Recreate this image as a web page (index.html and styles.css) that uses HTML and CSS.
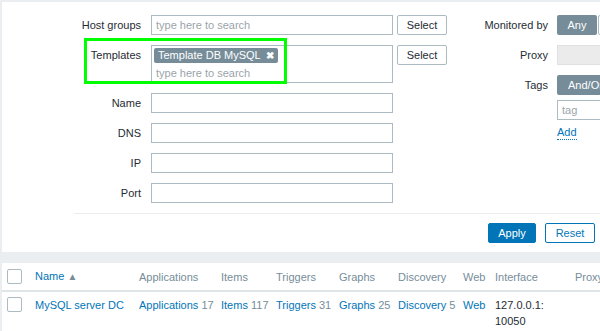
FILE: index.html
```html
<!DOCTYPE html>
<html>
<head>
<meta charset="utf-8">
<link rel="stylesheet" href="styles.css">
</head>
<body>
<div class="filter">
  <div class="columns">
    <div class="col-left">
      <div class="row">
        <label class="lbl">Host groups</label>
        <div class="input placeholder">type here to search</div>
        <button class="btn-alt">Select</button>
      </div>
      <div class="row highlight-row">
        <label class="lbl">Templates</label>
        <div class="multiselect">
          <span class="chip">Template DB MySQL <span class="chip-x">✖</span></span>
          <div class="placeholder ms-ph">type here to search</div>
        </div>
        <button class="btn-alt">Select</button>
        <div class="highlight"></div>
      </div>
      <div class="row">
        <label class="lbl">Name</label>
        <div class="input"></div>
      </div>
      <div class="row">
        <label class="lbl">DNS</label>
        <div class="input"></div>
      </div>
      <div class="row">
        <label class="lbl">IP</label>
        <div class="input"></div>
      </div>
      <div class="row">
        <label class="lbl">Port</label>
        <div class="input"></div>
      </div>
    </div>
    <div class="col-right">
      <div class="row">
        <label class="lbl lbl-r">Monitored by</label>
        <div class="seg">
          <span class="seg-on">Any</span><span class="seg-off"></span><span class="seg-off"></span>
        </div>
      </div>
      <div class="row">
        <label class="lbl lbl-r">Proxy</label>
        <div class="input disabled"></div>
      </div>
      <div class="row">
        <label class="lbl lbl-r">Tags</label>
        <div class="tagblock">
          <div class="seg">
            <span class="seg-on seg-wide">And/Or</span><span class="seg-off"></span>
          </div>
          <div class="input tag-input placeholder">tag</div>
          <a class="add">Add</a>
        </div>
      </div>
    </div>
  </div>
  <div class="sep"></div>
  <div class="actions">
    <button class="btn-apply">Apply</button>
    <button class="btn-reset">Reset</button>
  </div>
</div>

<table class="list">
  <colgroup>
    <col class="c-cb"><col class="c-name"><col class="c-apps"><col class="c-items"><col class="c-trig"><col class="c-graphs"><col class="c-disc"><col class="c-web"><col class="c-if"><col class="c-proxy">
  </colgroup>
  <thead>
    <tr>
      <th><span class="cb"></span></th>
      <th><a class="link">Name</a> <span class="arrow">▲</span></th>
      <th>Applications</th>
      <th>Items</th>
      <th>Triggers</th>
      <th>Graphs</th>
      <th>Discovery</th>
      <th>Web</th>
      <th>Interface</th>
      <th>Proxy</th>
    </tr>
  </thead>
  <tbody>
    <tr>
      <td><span class="cb"></span></td>
      <td><a class="link">MySQL server DC</a></td>
      <td><a class="link">Applications</a> <span class="cnt">17</span></td>
      <td><a class="link">Items</a> <span class="cnt">117</span></td>
      <td><a class="link">Triggers</a> <span class="cnt">31</span></td>
      <td><a class="link">Graphs</a> <span class="cnt">25</span></td>
      <td><a class="link">Discovery</a> <span class="cnt">5</span></td>
      <td><a class="link">Web</a></td>
      <td class="wrap">127.0.0.1: 10050</td>
      <td></td>
    </tr>
  </tbody>
</table>
</body>
</html>
```

FILE: styles.css
```css
* { box-sizing: border-box; }
html, body {
  margin: 0;
  padding: 0;
  background: #ebeef0;
  overflow: hidden;
  width: 600px;
  height: 331px;
}
body {
  font-family: "Liberation Sans", Arial, sans-serif;
  font-size: 11px;
  color: #1f2c33;
}
.filter {
  margin: 2px 0 0 2px;
  width: 598px;
  height: 250px;
  background: #fff;
  padding-top: 13px;
  overflow: hidden;
}
.columns {
  display: flex;
  width: 900px;
}
.col-left {
  display: flex;
  flex-direction: column;
  gap: 10px;
  width: 445px;
  flex: none;
}
.col-right {
  display: flex;
  flex-direction: column;
  gap: 10px;
  flex: none;
}
.row {
  display: flex;
  align-items: flex-start;
  position: relative;
}
.lbl {
  width: 139px;
  margin-right: 10px;
  text-align: right;
  line-height: 20px;
  flex: none;
}
.lbl-r {
  width: 101px;
  margin-right: 9px;
}
.input {
  width: 242px;
  height: 20px;
  border: 1px solid #acbbc2;
  flex: none;
  line-height: 18px;
  padding: 0 4px;
}
.placeholder { color: #9aa5ab; }
.disabled {
  background: #ebebeb;
  border-color: #e0e0e0;
  width: 200px;
}
.multiselect {
  width: 242px;
  height: 38px;
  border: 1px solid #acbbc2;
  padding: 2px 2px 0;
  flex: none;
}
.chip {
  display: inline-block;
  background: #768d99;
  color: #fff;
  height: 15px;
  line-height: 15px;
  padding: 0 4px 0 4px;
  border-radius: 2px;
  font-size: 11px;
}
.chip-x {
  font-size: 10px;
  margin-left: 3px;
  font-weight: bold;
}
.ms-ph {
  line-height: 20px;
  padding-left: 2px;
}
.btn-alt {
  margin-left: 4px;
  width: 50px;
  height: 20px;
  border: 1px solid #acbbc2;
  background: #fff;
  color: #1f2c33;
  font: inherit;
  padding: 0;
  border-radius: 2px;
  flex: none;
}
.highlight {
  position: absolute;
  left: 82px;
  top: -7px;
  width: 203px;
  height: 46px;
  border: 3px solid #00ff00;
  pointer-events: none;
}
.seg {
  display: flex;
  height: 20px;
  flex: none;
}
.seg span {
  line-height: 20px;
  height: 20px;
  border-radius: 2px;
}
.seg-on {
  background: #768d99;
  color: #fff;
  width: 40px;
  text-align: center;
}
.seg-wide { width: auto; padding: 0 11px; }
.seg-off {
  background: #fff;
  border: 1px solid #acbbc2;
  width: 50px;
  margin-left: 1px;
}
.tagblock {
  display: flex;
  flex-direction: column;
  align-items: flex-start;
}
.tag-input {
  margin-top: 5px;
  width: 150px;
  line-height: 18px;
}
.add {
  margin-top: 6px;
  color: #0275b8;
  border-bottom: 1px dotted #0275b8;
  line-height: 13px;
}
.sep {
  margin: 10px 0 0 72px;
  height: 1px;
  background: #ebeef0;
}
.actions {
  display: flex;
  justify-content: flex-end;
  gap: 9px;
  padding: 9px 5px 0 0;
}
.btn-apply, .btn-reset {
  font: inherit;
  height: 20px;
  padding: 0;
  border-radius: 2px;
}
.btn-apply {
  width: 48px;
  background: #0275b8;
  border: 1px solid #0275b8;
  color: #fff;
}
.btn-reset {
  width: 50px;
  background: #fff;
  border: 1px solid #0275b8;
  color: #0275b8;
}
.list {
  margin: 11px 0 0 2px;
  width: 700px;
  background: #fff;
  border-collapse: collapse;
  table-layout: fixed;
}
.c-cb { width: 28px; }
.c-name { width: 104px; }
.c-apps { width: 82px; }
.c-items { width: 55px; }
.c-trig { width: 63px; }
.c-graphs { width: 59px; }
.c-disc { width: 65px; }
.c-web { width: 32px; }
.c-if { width: 80px; }
.c-proxy { width: 152px; }
.list th {
  text-align: left;
  font-weight: normal;
  color: #768d99;
  padding: 5px 5px 5px;
  line-height: 16px;
  height: 26px;
  border-bottom: 2px solid #dfe4e7;
  vertical-align: middle;
  white-space: nowrap;
}
.list td {
  padding: 5px 5px;
  line-height: 16px;
  vertical-align: top;
  white-space: nowrap;
}
.list td.wrap { white-space: normal; }
.cb {
  display: block;
  width: 15px;
  height: 15px;
  border: 1px solid #acbbc2;
  border-radius: 2px;
  background: #fff;
}
.link {
  color: #0275b8;
}
.arrow {
  color: #768d99;
  font-size: 10px;
}
.cnt {
  color: #768d99;
}
```
